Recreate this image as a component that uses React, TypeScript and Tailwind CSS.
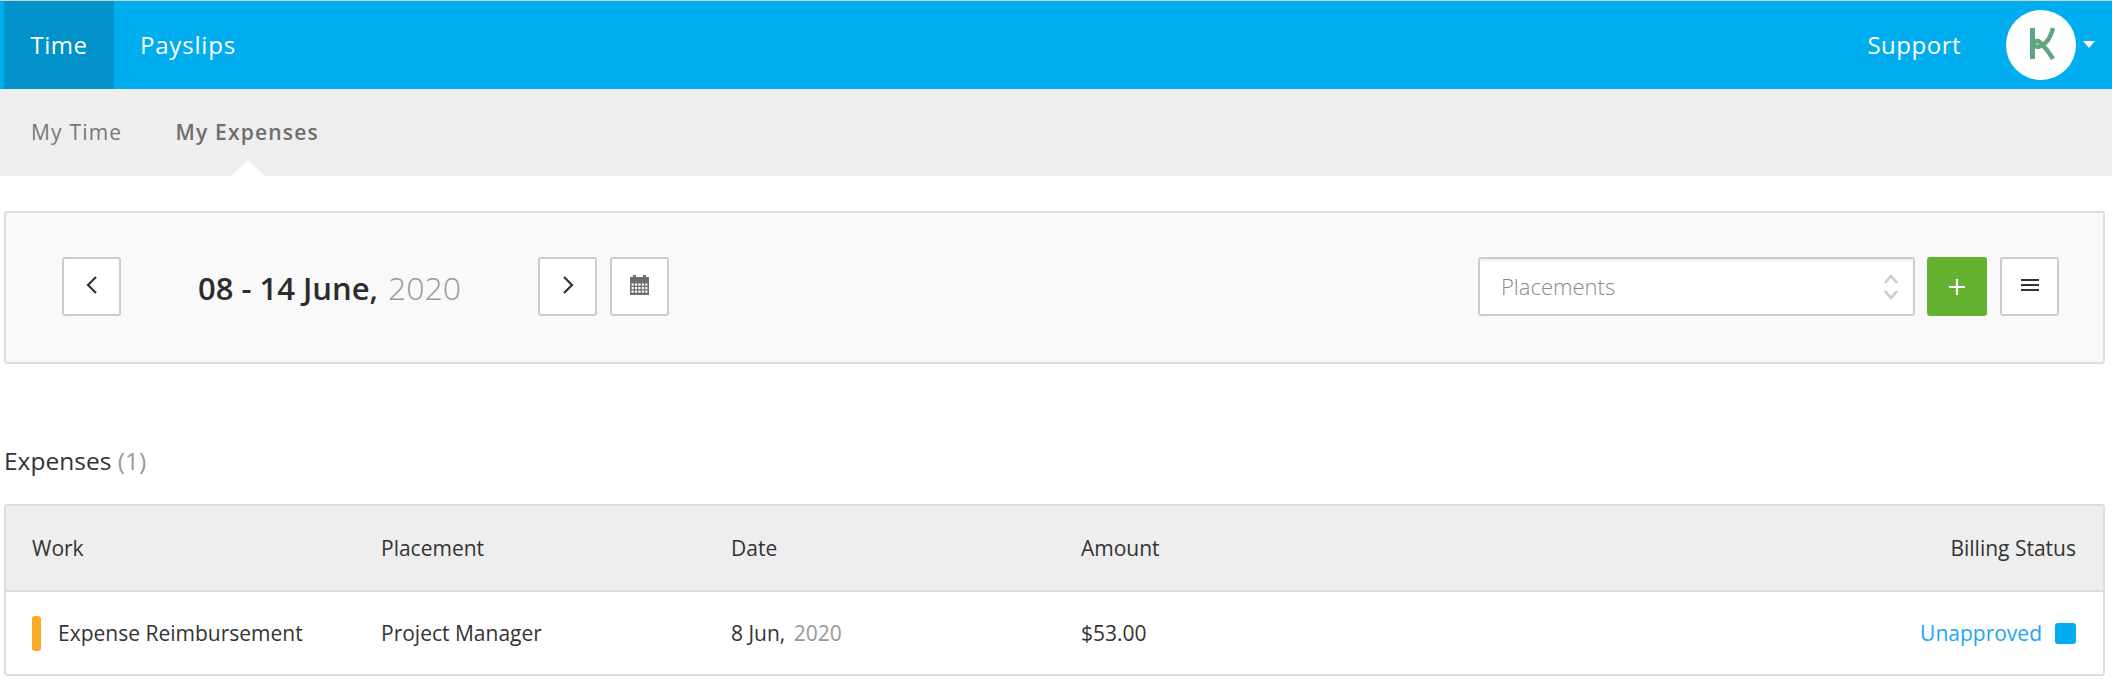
import React from "react";

function IconBtn({ children, className = "" }: { children: React.ReactNode; className?: string }) {
  return (
    <button className={`flex h-[59px] w-[59px] items-center justify-center rounded-[3px] border-2 border-[#cccccc] bg-white ${className}`}>
      {children}
    </button>
  );
}

const Chevron = ({ right }: { right?: boolean }) => (
  <svg className="mb-[3px]" width="14" height="20" viewBox="0 0 14 20" fill="none" stroke="#333" strokeWidth="2.2">
    <path d={right ? "M3 2l8 8-8 8" : "M11 2l-8 8 8 8"} />
  </svg>
);

const Calendar = () => (
  <svg className="mb-[4px]" width="21" height="21" viewBox="0 0 21 21">
    <path d="M1 3h3V1h3v2h7V1h3v2h3v18H1z" fill="#6e6e6e" />
    {[0, 1, 2, 3, 4].map((c) =>
      [0, 1, 2].map((r) => <rect key={`${c}-${r}`} x={2.6 + c * 3.4} y={9.5 + r * 3.5} width="2.2" height="2.2" fill="#ffffff" />),
    )}
  </svg>
);

const Logo = () => (
  <svg width="70" height="70" viewBox="0 0 70 70" fill="none">
    <rect x="24" y="18" width="5" height="31" fill="#5fa581" />
    <path d="M47 18C45 26 41 33 36 35C33 30 30 30 28 33" stroke="#5fa581" strokeWidth="4.5" />
    <path d="M28 35C31 38 34 37 36 35C41 39 44 44 47 49" stroke="#5fa581" strokeWidth="4.5" />
  </svg>
);

export default function App() {
  return (
    <div className="min-h-[686px] bg-white font-['Open_Sans',sans-serif] text-[#333333]">
      <header className="flex h-[89px] items-stretch border-t border-t-[#c9d3d8] bg-[#00aeef] pl-1 text-white">
        <a className="flex w-[110px] items-center justify-center bg-[#0092c8] text-[24px] tracking-[0.5px]">Time</a>
        <a className="flex items-center pl-[26px] text-[24px] tracking-[0.8px]">Payslips</a>
        <div className="ml-auto flex items-center">
          <span className="mr-[45px] text-[24px] tracking-[0.5px]">Support</span>
          <div className="flex h-[70px] w-[70px] items-center justify-center rounded-full bg-white">
            <Logo />
          </div>
          <span className="mb-[1px] ml-[7px] mr-[17px] h-0 w-0 border-x-[6px] border-t-[7px] border-x-transparent border-t-white" />
        </div>
      </header>

      <nav className="relative flex h-[87px] items-center gap-[53px] bg-[#eeeeee] pl-[31px] text-[21px] tracking-[1.2px] text-[#777777]">
        <a>My Time</a>
        <a className="font-semibold text-[#6e6e6e]">My Expenses</a>
        <span className="absolute bottom-0 left-[231px] h-0 w-0 border-x-[17px] border-b-[16px] border-x-transparent border-b-white" />
      </nav>

      <main className="pl-1 pr-[7px] pt-[35px]">
        <section className="flex h-[153px] items-center rounded-[3px] border-2 border-[#dddddd] bg-[#f9f9f9] pb-[2px] pl-[56px] pr-[44px]">
          <IconBtn>
            <Chevron />
          </IconBtn>
          <h2 className="ml-[77px] mt-[2px] w-[340px] text-[31px] font-semibold leading-none text-[#2d2d2d]">
            08 - 14 June, <span className="ml-[2px] text-[32px] font-light text-[#999999]">2020</span>
          </h2>
          <IconBtn>
            <Chevron right />
          </IconBtn>
          <IconBtn className="ml-[13px]">
            <Calendar />
          </IconBtn>
          <div className="ml-auto flex items-center">
            <div className="flex h-[59px] w-[437px] items-center justify-between rounded-[3px] border-2 border-[#cccccc] bg-white pl-[21px] pr-[14px] shadow-[inset_0_2px_2px_rgba(0,0,0,0.06)]">
              <span className="mb-[1px] text-[22px] font-light text-[#8a8a8a]">Placements</span>
              <svg width="16" height="32" viewBox="0 0 16 32" fill="none" stroke="#cccccc" strokeWidth="2.6">
                <path d="M2 12l6-7 6 7M2 20l6 7 6-7" />
              </svg>
            </div>
            <button className="ml-[12px] flex h-[59px] w-[60px] items-center justify-center rounded-[3px] bg-[#62b22f]">
              <svg width="18" height="18" viewBox="0 0 18 18" stroke="#ffffff" strokeWidth="2.2">
                <path d="M9 1v16M1 9h16" />
              </svg>
            </button>
            <IconBtn className="ml-[13px]">
              <svg className="mb-[3px]" width="18" height="14" viewBox="0 0 18 14" stroke="#333333" strokeWidth="1.8">
                <path d="M0 2h18M0 7h18M0 12h18" />
              </svg>
            </IconBtn>
          </div>
        </section>

        <h3 className="mb-[27px] mt-[81px] text-[24.5px] font-normal leading-[32px] text-[#333333]">
          Expenses <span className="text-[#999999]">(1)</span>
        </h3>

        <section className="rounded-[3px] border-2 border-[#dddddd]">
          <div className="flex h-[86px] items-center border-b-2 border-b-[#dddddd] bg-[#eeeeee] pl-[26px] pr-[27px] pt-[2px] text-[21px]">
            <span className="w-[349px]">Work</span>
            <span className="w-[350px]">Placement</span>
            <span className="w-[350px]">Date</span>
            <span>Amount</span>
            <span className="ml-auto">Billing Status</span>
          </div>
          <div className="flex h-[82px] items-center pl-[26px] pr-[27px] pt-[2px] text-[21px]">
            <span className="flex w-[349px] items-center">
              <span className="mb-[2px] mr-[17px] h-[35px] w-[9px] rounded-[3px] bg-[#fbab27]" />
              Expense Reimbursement
            </span>
            <span className="w-[350px]">Project Manager</span>
            <span className="w-[350px]">
              8 Jun, <span className="ml-[3px] text-[#999999]">2020</span>
            </span>
            <span>$53.00</span>
            <span className="ml-auto flex items-center text-[#1ea7ec]">
              Unapproved
              <span className="mb-[2px] ml-[13px] h-[21px] w-[21px] rounded-[3px] bg-[#00aeef]" />
            </span>
          </div>
        </section>
      </main>
    </div>
  );
}
